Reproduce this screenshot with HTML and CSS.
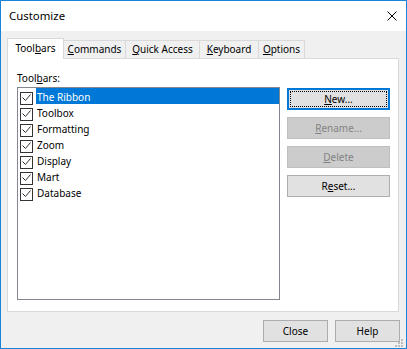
FILE: index.html
```html
<!DOCTYPE html>
<html>
<head>
<meta charset="utf-8">
<link rel="stylesheet" href="styles.css">
</head>
<body>
<div class="window">
  <div class="titlebar">
    <span class="title">Customize</span>
    <svg class="close-x" width="10" height="10" viewBox="0 0 10 10"><path d="M0.5 0.5 L9.5 9.5 M9.5 0.5 L0.5 9.5" stroke="#000" stroke-width="1" fill="none"/></svg>
  </div>
  <div class="body">
    <div class="tabs">
      <div class="tab active">Tool<u>b</u>ars</div>
      <div class="tab t-commands"><u>C</u>ommands</div>
      <div class="tab t-quick"><u>Q</u>uick Access</div>
      <div class="tab t-keyboard"><u>K</u>eyboard</div>
      <div class="tab t-options"><u>O</u>ptions</div>
    </div>
    <div class="panel">
      <div class="label">Tool<u>b</u>ars:</div>
      <div class="panel-row">
        <div class="listbox">
          <div class="item selected"><span class="cb"><svg width="11" height="11" viewBox="0 0 11 11"><polyline points="1.5,4.5 4.5,7.5 9.5,1.5" fill="none" stroke="#333" stroke-width="1"/></svg></span><span class="txt">The Ribbon</span></div>
          <div class="item"><span class="cb"><svg width="11" height="11" viewBox="0 0 11 11"><polyline points="1.5,4.5 4.5,7.5 9.5,1.5" fill="none" stroke="#333" stroke-width="1"/></svg></span><span class="txt">Toolbox</span></div>
          <div class="item"><span class="cb"><svg width="11" height="11" viewBox="0 0 11 11"><polyline points="1.5,4.5 4.5,7.5 9.5,1.5" fill="none" stroke="#333" stroke-width="1"/></svg></span><span class="txt">Formatting</span></div>
          <div class="item"><span class="cb"><svg width="11" height="11" viewBox="0 0 11 11"><polyline points="1.5,4.5 4.5,7.5 9.5,1.5" fill="none" stroke="#333" stroke-width="1"/></svg></span><span class="txt">Zoom</span></div>
          <div class="item"><span class="cb"><svg width="11" height="11" viewBox="0 0 11 11"><polyline points="1.5,4.5 4.5,7.5 9.5,1.5" fill="none" stroke="#333" stroke-width="1"/></svg></span><span class="txt">Display</span></div>
          <div class="item"><span class="cb"><svg width="11" height="11" viewBox="0 0 11 11"><polyline points="1.5,4.5 4.5,7.5 9.5,1.5" fill="none" stroke="#333" stroke-width="1"/></svg></span><span class="txt">Mart</span></div>
          <div class="item"><span class="cb"><svg width="11" height="11" viewBox="0 0 11 11"><polyline points="1.5,4.5 4.5,7.5 9.5,1.5" fill="none" stroke="#333" stroke-width="1"/></svg></span><span class="txt">Database</span></div>
        </div>
        <div class="side-buttons">
          <button class="btn default"><u>N</u>ew...</button>
          <button class="btn disabled"><u>R</u>ename...</button>
          <button class="btn disabled"><u>D</u>elete</button>
          <button class="btn">R<u>e</u>set...</button>
        </div>
      </div>
    </div>
    <div class="footer">
      <button class="btn foot">Close</button>
      <button class="btn foot">Help</button>
    </div>
  </div>
  <svg class="grip" width="8" height="8" viewBox="0 0 8 8">
    <rect x="6" y="0" width="2" height="2" fill="#bcbcbc"/>
    <rect x="3" y="3" width="2" height="2" fill="#bcbcbc"/>
    <rect x="6" y="3" width="2" height="2" fill="#bcbcbc"/>
    <rect x="0" y="6" width="2" height="2" fill="#bcbcbc"/>
    <rect x="3" y="6" width="2" height="2" fill="#bcbcbc"/>
    <rect x="6" y="6" width="2" height="2" fill="#bcbcbc"/>
  </svg>
</div>
</body>
</html>
```

FILE: styles.css
```css
* { box-sizing: border-box; }
html, body { margin: 0; padding: 0; }
body {
  font-family: "Noto Sans", sans-serif;
  font-size: 10px;
  color: #000;
  background: #fff;
}
u { text-decoration: underline; text-underline-offset: 1px; }
.window {
  position: relative;
  width: 407px;
  height: 349px;
  border: 1px solid #1883d7;
  background: #f0f0f0;
  display: flex;
  flex-direction: column;
}
.titlebar {
  height: 30px;
  background: #fff;
  display: flex;
  align-items: center;
  justify-content: space-between;
  padding: 0 9px 0 8px;
  flex: none;
}
.title { font-size: 11.4px; line-height: 16px; }
.close-x { display: block; margin-bottom: 1px; }
.body {
  padding: 7px 6px 0 6px;
  display: flex;
  flex-direction: column;
}
.tabs {
  display: flex;
  height: 20px;
  align-items: flex-end;
  position: relative;
  z-index: 1;
}
.tab {
  height: 18px;
  border: 1px solid #d9d9d9;
  border-bottom: none;
  border-left: none;
  background: #f0f0f0;
  line-height: 17px;
  white-space: nowrap;
  text-align: center;
}
.t-commands { width: 62px; }
.t-quick { width: 74px; }
.t-keyboard { width: 59px; }
.t-options { width: 46px; }
.tab.active {
  width: 57px;
  height: 21px;
  margin-bottom: -1px;
  background: #fff;
  border-left: 1px solid #d9d9d9;
  line-height: 19px;
}
.panel {
  width: 392px;
  height: 254px;
  border: 1px solid #d9d9d9;
  background: #fff;
  padding: 13px 0 0 9px;
}
.label { line-height: 13px; height: 15px; }
.panel-row {
  display: flex;
  gap: 7px;
}
.listbox {
  width: 263px;
  height: 213px;
  border: 1px solid #828790;
  background: #fff;
  padding: 0 0 0 2px;
}
.item {
  display: flex;
  align-items: flex-start;
  height: 16px;
}
.cb {
  width: 13px;
  height: 13px;
  margin-top: 4px;
  border: 1px solid #333;
  background: #fff;
  flex: none;
  margin-right: 3px;
}
.cb svg { display: block; }
.txt {
  flex: 1;
  height: 16px;
  line-height: 18px;
  padding-left: 1px;
}
.item.selected .txt { background: #0078d7; color: #fff; }
.side-buttons {
  display: flex;
  flex-direction: column;
  gap: 7px;
  margin-top: 1px;
}
.btn {
  font-family: inherit;
  font-size: 10px;
  width: 103px;
  height: 22px;
  background: #e1e1e1;
  border: 1px solid #adadad;
  color: #000;
  padding: 0;
  margin: 0;
  line-height: 18px;
}
.btn.default {
  border: 2px solid #0078d7;
  outline: 1px dotted #000;
  outline-offset: -4px;
}
.btn.disabled {
  background: #cccccc;
  border-color: #bfbfbf;
  color: #838383;
}
.footer {
  display: flex;
  justify-content: flex-end;
  gap: 7px;
  padding-top: 8px;
}
.btn.foot { width: 65px; }
.grip {
  position: absolute;
  right: 3px;
  bottom: 1px;
}
```
